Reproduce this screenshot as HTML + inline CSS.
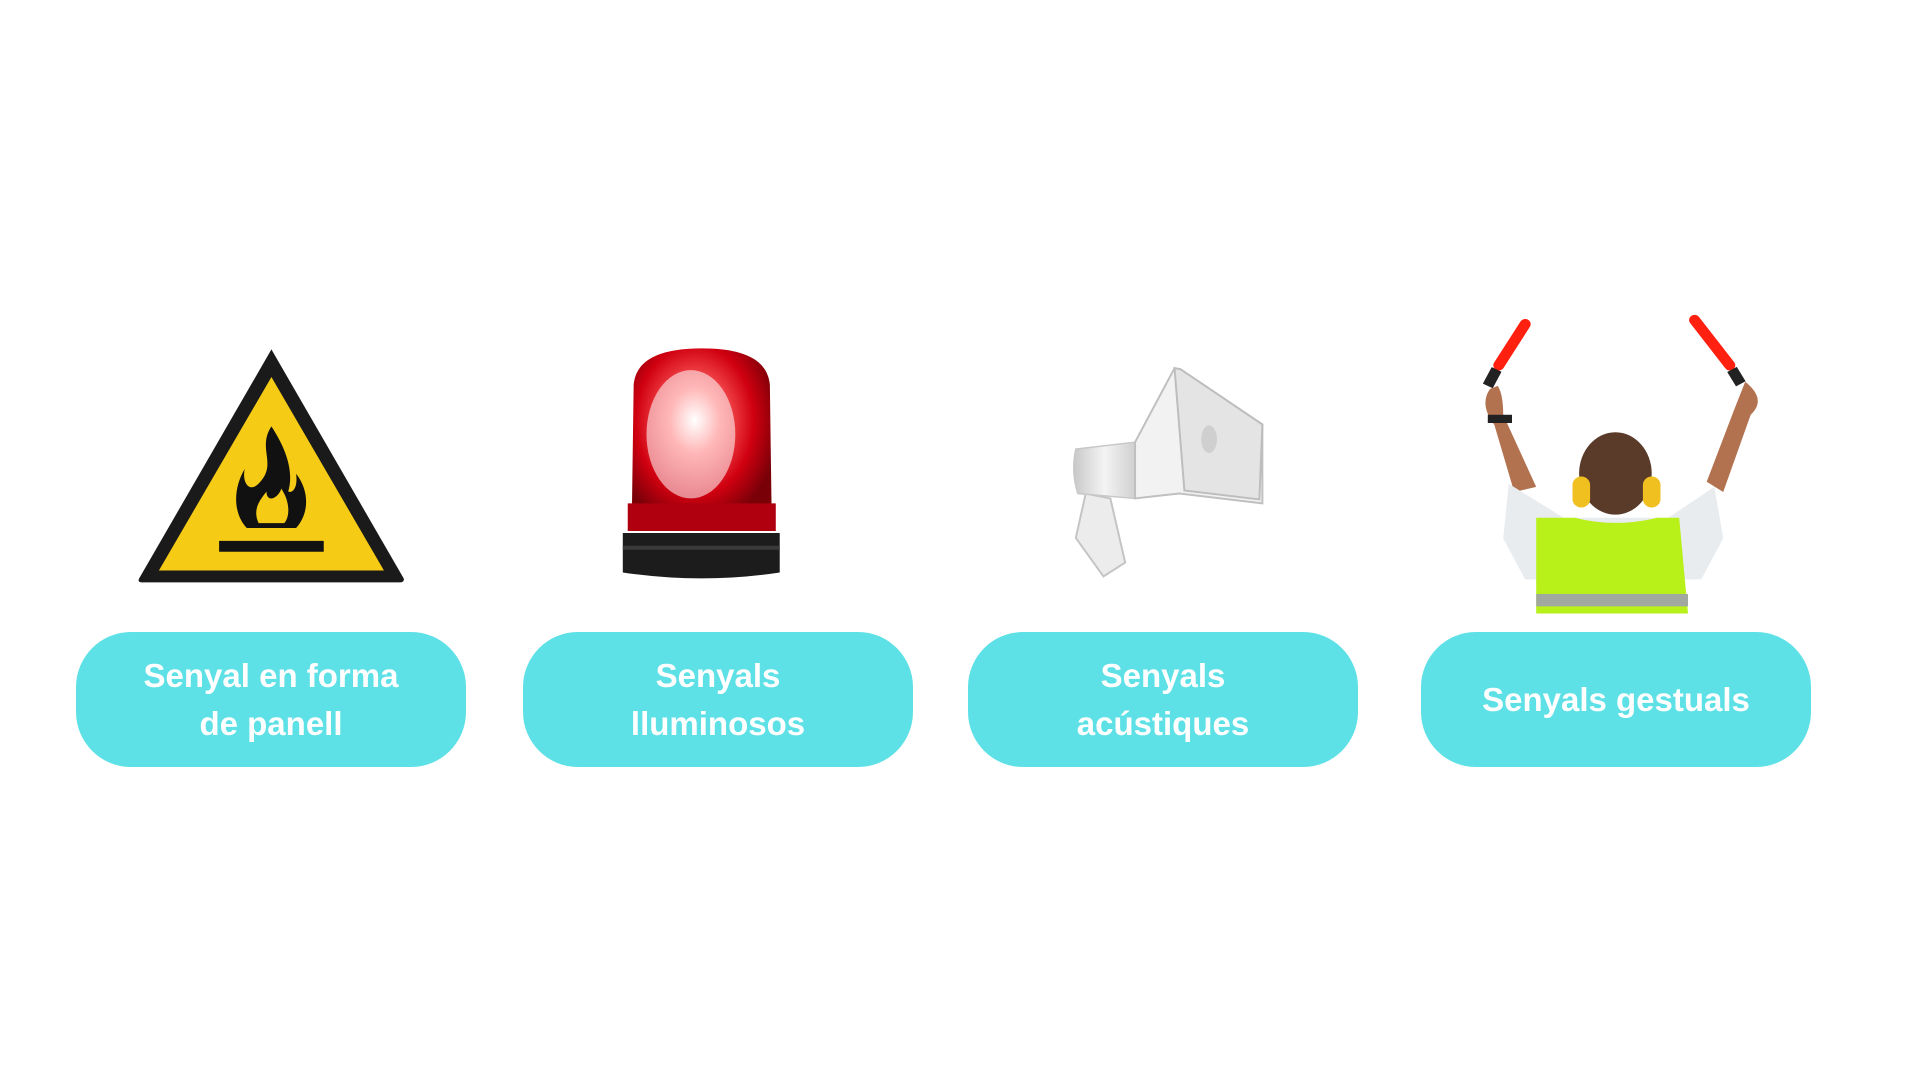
<!DOCTYPE html>
<html><head><meta charset="utf-8"><style>
html,body{margin:0;padding:0;width:1920px;height:1080px;background:#fff;overflow:hidden;font-family:"Liberation Sans",sans-serif}
.b{position:absolute;top:632px;width:390px;height:135px;border-radius:55px;background:#5ee1e6;color:#fff;font-weight:bold;font-size:33px;line-height:48px;display:flex;align-items:center;justify-content:center;text-align:center}
svg{position:absolute;left:0;top:0}
</style></head><body>
<svg width="1920" height="1080" viewBox="0 0 1920 1080">
<defs>
<radialGradient id="rg" cx="0.45" cy="0.4" r="0.6"><stop offset="0" stop-color="#fff"/><stop offset="0.3" stop-color="#ff6060"/><stop offset="0.7" stop-color="#d00010"/><stop offset="1" stop-color="#7a0008"/></radialGradient>
<linearGradient id="mg" x1="0" x2="1"><stop offset="0" stop-color="#c8c8c8"/><stop offset="0.5" stop-color="#f4f4f4"/><stop offset="1" stop-color="#d0d0d0"/></linearGradient>
</defs>
<g transform="scale(0.987)">
<!-- warning sign -->
<path d="M275 354 L409 586 Q410 590 405 590 L144 590 Q139 590 141 586 Z" fill="#1a1a1a"/>
<path d="M275 382 L389 578 L161 578 Z" fill="#f5cb16"/>
<path d="M275 432 C260 455 282 470 262 490 C252 500 245 488 248 475 C236 495 236 520 250 535 L300 535 C315 518 312 495 300 480 C302 495 296 500 292 498 C298 478 290 455 275 432 Z" fill="#111"/>
<path d="M262 530 C255 515 265 505 270 498 C270 510 282 505 285 495 C295 510 293 525 288 530 Z" fill="#f5cb16"/>
<rect x="222" y="548" width="106" height="11" fill="#111"/>
<!-- beacon -->
<path d="M640 535 L642 390 Q645 353 711 353 Q777 353 780 390 L782 535 Z" fill="url(#rg)"/>
<ellipse cx="700" cy="440" rx="45" ry="65" fill="#fff" opacity="0.55"/>
<rect x="636" y="510" width="150" height="28" fill="#b00010"/>
<path d="M631 540 L790 540 L790 580 Q711 592 631 580 Z" fill="#1c1c1c"/>
<rect x="631" y="553" width="159" height="4" fill="#3a3a3a"/>
<!-- megaphone -->
<path d="M1100 500 L1125 505 L1140 570 L1118 584 L1090 545 Z" fill="#ececec" stroke="#c4c4c4" stroke-width="2"/>
<path d="M1090 455 Q1085 478 1092 500 L1150 505 L1150 448 Z" fill="url(#mg)" stroke="#c8c8c8" stroke-width="1.5"/>
<path d="M1150 448 L1190 373 L1279 430 L1279 510 L1195 500 L1150 505 Z" fill="#f2f2f2" stroke="#c0c0c0" stroke-width="2"/>
<path d="M1190 373 L1196 374 L1279 430 L1276 506 L1200 497 Z" fill="#e4e4e4" stroke="#bdbdbd" stroke-width="2"/>
<ellipse cx="1225" cy="445" rx="8" ry="14" fill="#cfcfcf"/>
</g>
<!-- person -->
<g transform="translate(1479,320) scale(1.1,1.03) translate(-1498,-328)">
<line x1="1540" y1="332" x2="1516" y2="372" stroke="#ff2010" stroke-width="10" stroke-linecap="round"/>
<line x1="1514" y1="376" x2="1506" y2="392" stroke="#222" stroke-width="10"/>
<line x1="1694" y1="328" x2="1726" y2="372" stroke="#ff2010" stroke-width="10" stroke-linecap="round"/>
<line x1="1728" y1="376" x2="1736" y2="390" stroke="#222" stroke-width="10"/>
<path d="M1508 395 Q1498 410 1512 430 L1530 495 L1550 490 L1520 420 Q1520 400 1515 392 Z" fill="#b27250"/>
<path d="M1740 388 Q1760 405 1745 420 L1720 495 L1705 485 L1730 415 Z" fill="#b27250"/>
<rect x="1506" y="420" width="22" height="8" fill="#222"/>
<path d="M1525 487 L1575 520 L1670 520 L1712 490 L1720 540 L1700 580 L1540 580 L1520 540 Z" fill="#e9ecef"/>
<ellipse cx="1622" cy="477" rx="33" ry="40" fill="#5a3a28"/>
<rect x="1583" y="480" width="16" height="30" rx="8" fill="#f0c020"/>
<rect x="1647" y="480" width="16" height="30" rx="8" fill="#f0c020"/>
<path d="M1550 520 L1585 520 Q1622 530 1660 520 L1680 520 L1688 613 L1550 613 Z" fill="#b8f01a"/>
<rect x="1550" y="594" width="138" height="12" fill="#a0a8a0"/>
</g>
</svg>
<div class="b" style="left:76px">Senyal en forma<br>de panell</div>
<div class="b" style="left:523px">Senyals<br>lluminosos</div>
<div class="b" style="left:968px">Senyals<br>acústiques</div>
<div class="b" style="left:1421px">Senyals gestuals</div>
</body></html>
